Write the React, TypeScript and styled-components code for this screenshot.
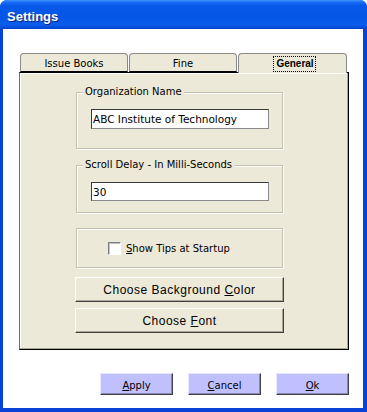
import React from 'react';
import styled, { createGlobalStyle } from 'styled-components';

const Global = createGlobalStyle`
  html, body { margin: 0; padding: 0; background: #fff; }
  body { font-family: "DejaVu Sans", sans-serif; font-size: 10px; color: #000; }
  #root { width: 367px; height: 412px; }
`;

const Window = styled.div`
  width: 367px;
  height: 412px;
  box-sizing: border-box;
  display: flex;
  flex-direction: column;
  background: #0842d6;
  border-radius: 7px 7px 0 0;
  overflow: hidden;
`;

const TitleBar = styled.div`
  height: 29px;
  flex: none;
  display: flex;
  align-items: center;
  padding-left: 7px;
  background: linear-gradient(
    to bottom,
    #3d95ff 0%,
    #1a6cf5 8%,
    #0758e8 20%,
    #0457e6 60%,
    #0a5cea 85%,
    #0650de 93%,
    #0342cc 100%
  );
`;

const Title = styled.span`
  font-family: "Liberation Sans", Arial, sans-serif;
  font-weight: bold;
  font-size: 13px;
  color: #fff;
  text-shadow: 1px 1px 0 #0a1e80;
  margin-top: 3px;
`;

const Client = styled.div`
  flex: 1;
  margin: 0 4px 4px 3px;
  background: #fff;
  display: flex;
  flex-direction: column;
  padding: 24px 14px 0 16px;
`;

const TabControl = styled.div`
  width: 330px;
  display: flex;
  flex-direction: column;
`;

const TabStrip = styled.div`
  display: flex;
  height: 19px;
  padding-left: 1px;
  position: relative;
  z-index: 1;
`;

const Tab = styled.div<{ $active?: boolean }>`
  box-sizing: border-box;
  width: ${p => (p.$active ? 109 : 108)}px;
  height: ${p => (p.$active ? 20 : 19)}px;
  margin-right: 1px;
  background: #ece9d8;
  border: 1px solid #8a8a8a;
  border-bottom: ${p => (p.$active ? 'none' : '1px solid #000')};
  border-radius: 4px 4px 0 0;
  display: flex;
  align-items: center;
  justify-content: center;
  font-family: ${p => (p.$active ? '"Liberation Sans", Arial, sans-serif' : '"DejaVu Sans", sans-serif')};
  font-weight: ${p => (p.$active ? 'bold' : 'normal')};
  font-size: 10px;
  padding-top: 1px;
`;

const Focus = styled.span`
  border: 1px dotted #000;
  padding: 1px 1px 2px 2px;
  margin-left: 4px;
`;

const Panel = styled.div`
  box-sizing: border-box;
  height: 278px;
  background: #ece9d8;
  border: 1px solid;
  border-color: #000 #000 #000 #6f6f6f;
  box-shadow: inset -1px -1px 0 #aca899, inset 1px 1px 0 #fff;
  display: flex;
  flex-direction: column;
  padding: 19px 0 0 55px;
`;

const Group = styled.div<{ $h: number; $top: number }>`
  position: relative;
  box-sizing: border-box;
  width: 207px;
  height: ${p => p.$h}px;
  margin-top: ${p => p.$top}px;
  margin-left: 1px;
  border: 1px solid #c4c1b0;
  box-shadow: inset 1px 1px 0 #fff, 1px 1px 0 #fff;
  padding: 16px 0 0 14px;
`;

const Legend = styled.span`
  position: absolute;
  top: -7px;
  left: 6px;
  padding: 0 2px;
  background: #ece9d8;
  font-size: 10px;
  line-height: 12px;
`;

const TextBox = styled.div<{ $h: number }>`
  box-sizing: border-box;
  width: 178px;
  height: ${p => p.$h}px;
  background: #fff;
  border: 1px solid;
  border-color: #3a3a3a #8a8a8a #8a8a8a #3a3a3a;
  font-size: 10.5px;
  display: flex;
  align-items: center;
  padding-left: 1px;
`;

const CheckRow = styled.div`
  display: flex;
  align-items: center;
  padding: 13px 0 0 17px;
  margin-top: -16px;
  gap: 5px;
  font-size: 10px;
`;

const CheckBox = styled.div`
  box-sizing: border-box;
  width: 13px;
  height: 13px;
  background: #fff;
  border: 1px solid;
  border-color: #808080 #fff #fff #808080;
  box-shadow: inset 1px 1px 0 #c0c0c0;
`;

const Mn = styled.span`
  text-decoration: underline;
  text-underline-offset: 1px;
`;

const WideButton = styled.div<{ $top: number }>`
  box-sizing: border-box;
  width: 209px;
  height: 25px;
  margin-top: ${p => p.$top}px;
  background: #ece9d8;
  border: 1px solid;
  border-color: #fff #404040 #404040 #fff;
  box-shadow: inset -1px -1px 0 #aca899;
  display: flex;
  align-items: center;
  justify-content: center;
  font-family: "Liberation Sans", Arial, sans-serif;
  font-size: 12px;
  letter-spacing: 0.5px;
`;

const ButtonRow = styled.div`
  display: flex;
  justify-content: flex-end;
  gap: 15px;
  margin-top: 23px;
  width: 330px;
`;

const DlgButton = styled.div`
  box-sizing: border-box;
  width: 73px;
  height: 22px;
  background: #c0c0fe;
  border: 1px solid;
  border-color: #e6e6ff #404040 #404040 #e6e6ff;
  box-shadow: inset -1px -1px 0 #8a8ab8;
  display: flex;
  align-items: center;
  justify-content: center;
  font-size: 10px;
  padding-top: 2px;
`;

export default function App() {
  return (
    <>
      <Global />
      <Window>
        <TitleBar>
          <Title>Settings</Title>
        </TitleBar>
        <Client>
          <TabControl>
            <TabStrip>
              <Tab>Issue Books</Tab>
              <Tab>Fine</Tab>
              <Tab $active>
                <Focus>General</Focus>
              </Tab>
            </TabStrip>
            <Panel>
              <Group $h={57} $top={0}>
                <Legend>Organization Name</Legend>
                <TextBox $h={20}>ABC Institute of Technology</TextBox>
              </Group>
              <Group $h={48} $top={16}>
                <Legend>Scroll Delay - In Milli-Seconds</Legend>
                <TextBox $h={19}>30</TextBox>
              </Group>
              <Group $h={40} $top={15}>
                <CheckRow>
                  <CheckBox />
                  <span>
                    <Mn>S</Mn>how Tips at Startup
                  </span>
                </CheckRow>
              </Group>
              <WideButton $top={9}>
                <span>
                  Choose Background <Mn>C</Mn>olor
                </span>
              </WideButton>
              <WideButton $top={6}>
                <span>
                  Choose <Mn>F</Mn>ont
                </span>
              </WideButton>
            </Panel>
          </TabControl>
          <ButtonRow>
            <DlgButton>
              <span>
                <Mn>A</Mn>pply
              </span>
            </DlgButton>
            <DlgButton>
              <span>
                <Mn>C</Mn>ancel
              </span>
            </DlgButton>
            <DlgButton>
              <span>
                <Mn>O</Mn>k
              </span>
            </DlgButton>
          </ButtonRow>
        </Client>
      </Window>
    </>
  );
}
